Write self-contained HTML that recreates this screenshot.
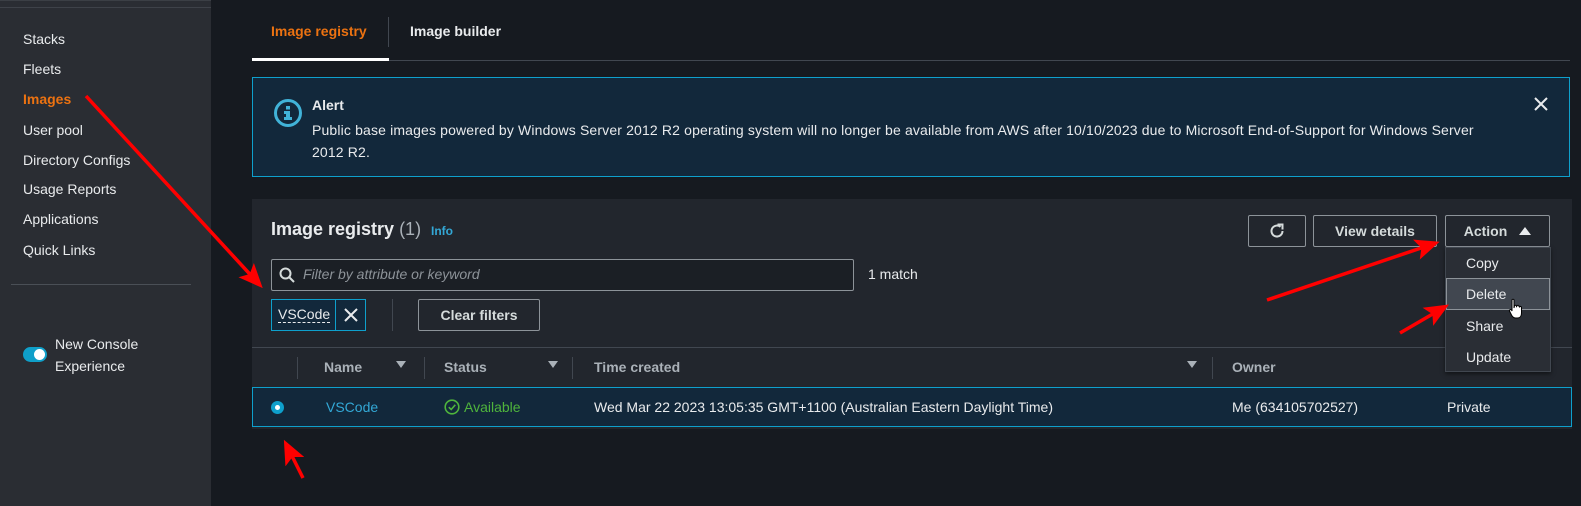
<!DOCTYPE html>
<html><head><meta charset="utf-8"><style>
*{box-sizing:border-box;margin:0;padding:0}
body{width:1581px;height:506px;background:#161a20;font-family:"Liberation Sans",sans-serif;color:#d5dbdb;font-size:14px;position:relative;overflow:hidden}
.a{position:absolute;white-space:nowrap}
.sb{position:absolute;left:0;top:0;width:211px;height:506px;background:#2a2d33;border-top:1px solid #3b3f45}
.nav{position:absolute;left:23px;font-size:14px;color:#e9ebed;line-height:16px}
.btn{position:absolute;border:1px solid #8d9399;border-radius:2px;color:#d5dbdb;font-weight:bold;font-size:14px;display:flex;align-items:center;justify-content:center}
.th{position:absolute;top:359px;font-weight:bold;color:#aab1b8;font-size:14px}
.vd{position:absolute;width:1px;background:#414750}
.tri{position:absolute;top:361px;width:0;height:0;border-left:5px solid transparent;border-right:5px solid transparent;border-top:7px solid #aab1b8}
</style></head><body>
<div class="sb"></div>
<div style="position:absolute;left:0;top:7px;width:211px;height:1px;background:#3e4249"></div>
<div class="nav" style="top:31px">Stacks</div>
<div class="nav" style="top:61px">Fleets</div>
<div class="nav" style="top:91px;color:#ec7211;font-weight:bold">Images</div>
<div class="nav" style="top:122px">User pool</div>
<div class="nav" style="top:152px">Directory Configs</div>
<div class="nav" style="top:181px">Usage Reports</div>
<div class="nav" style="top:211px">Applications</div>
<div class="nav" style="top:242px">Quick Links</div>
<div style="position:absolute;left:11px;top:284px;width:180px;height:1px;background:#4a4f56"></div>
<div style="position:absolute;left:23px;top:347px;width:24px;height:15px;border-radius:8px;background:#0f9fc9"></div>
<div style="position:absolute;left:34px;top:349px;width:11px;height:11px;border-radius:50%;background:#fff"></div>
<div class="nav" style="left:55px;top:333px;line-height:22px">New Console<br>Experience</div>

<div class="a" style="left:271px;top:23px;color:#ec7211;font-weight:bold;font-size:14px">Image registry</div>
<div style="position:absolute;left:388px;top:17px;width:1px;height:30px;background:#414750"></div>
<div class="a" style="left:410px;top:23px;color:#e9ebed;font-weight:bold;font-size:14px">Image builder</div>
<div style="position:absolute;left:252px;top:60px;width:1318px;height:1px;background:#414750"></div>
<div style="position:absolute;left:252px;top:58px;width:137px;height:3px;background:#fff"></div>

<div style="position:absolute;left:252px;top:77px;width:1318px;height:100px;background:#12283b;border:1px solid #0ea0cc"></div>
<svg class="a" style="left:272px;top:97px" width="32" height="32" viewBox="0 0 32 32"><circle cx="16" cy="16" r="12.5" fill="none" stroke="#41b3d8" stroke-width="3"/><rect x="14" y="9" width="4" height="3.5" fill="#41b3d8"/><rect x="12" y="14" width="6" height="3" fill="#41b3d8"/><rect x="14" y="14" width="4" height="8" fill="#41b3d8"/><rect x="12" y="20" width="8" height="3" fill="#41b3d8"/></svg>
<div class="a" style="left:312px;top:97px;font-weight:bold;color:#e9ebed">Alert</div>
<div class="a" style="left:312px;top:119px;color:#e9ebed;line-height:22px;letter-spacing:0.15px">Public base images powered by Windows Server 2012 R2 operating system will no longer be available from AWS after 10/10/2023 due to Microsoft End-of-Support for Windows Server<br>2012 R2.</div>
<svg class="a" style="left:1533px;top:96px" width="16" height="16"><path d="M2 2L14 14M14 2L2 14" stroke="#e9ebed" stroke-width="2"/></svg>

<div style="position:absolute;left:252px;top:199px;width:1320px;height:230px;background:#22262d"></div>
<div class="a" style="left:271px;top:219px;font-size:18px;font-weight:bold;color:#e9ebed">Image registry <span style="font-weight:normal;color:#aab1b8">(1)</span></div>
<div class="a" style="left:431px;top:224px;font-size:12px;font-weight:bold;color:#33a8d6">Info</div>
<div class="btn" style="left:1248px;top:215px;width:58px;height:32px"><svg width="18" height="18" viewBox="0 0 18 18"><path d="M14.5 9A5.5 5.5 0 1 1 12.5 4.8" fill="none" stroke="#d5dbdb" stroke-width="2"/><path d="M9.5 2.5H14.5V7.5" fill="none" stroke="#d5dbdb" stroke-width="2"/></svg></div>
<div class="btn" style="left:1313px;top:215px;width:124px;height:32px">View details</div>
<div class="btn" style="left:1445px;top:215px;width:105px;height:32px">Action <span style="display:inline-block;margin-left:12px;width:0;height:0;border-left:6px solid transparent;border-right:6px solid transparent;border-bottom:8px solid #e9ebed"></span></div>

<div style="position:absolute;left:271px;top:259px;width:583px;height:32px;border:1px solid #8d9399;border-radius:2px;background:#1b1f25"></div>
<svg class="a" style="left:279px;top:267px" width="16" height="16"><circle cx="6.5" cy="6.5" r="5" fill="none" stroke="#d5dbdb" stroke-width="2"/><path d="M10 10L15 15" stroke="#d5dbdb" stroke-width="2"/></svg>
<div class="a" style="left:303px;top:266px;font-style:italic;color:#8d9399">Filter by attribute or keyword</div>
<div class="a" style="left:868px;top:266px;color:#e9ebed">1 match</div>

<div style="position:absolute;left:271px;top:299px;width:95px;height:32px;border:1px solid #0ea0cc;background:#12283b"></div>
<div style="position:absolute;left:335px;top:300px;width:1px;height:30px;background:#0ea0cc"></div>
<div class="a" style="left:278px;top:306px;color:#e9ebed;border-bottom:1px dashed #e9ebed;line-height:16px">VSCode</div>
<svg class="a" style="left:343px;top:307px" width="16" height="16"><path d="M2 2L14 14M14 2L2 14" stroke="#e9ebed" stroke-width="2"/></svg>
<div class="vd" style="left:392px;top:299px;height:32px"></div>
<div class="btn" style="left:418px;top:299px;width:122px;height:32px">Clear filters</div>

<div style="position:absolute;left:252px;top:347px;width:1320px;height:1px;background:#414750"></div>
<div class="vd" style="left:297px;top:357px;height:22px"></div>
<div class="th" style="left:324px">Name</div><div class="tri" style="left:396px"></div>
<div class="vd" style="left:424px;top:357px;height:22px"></div>
<div class="th" style="left:444px">Status</div><div class="tri" style="left:548px"></div>
<div class="vd" style="left:572px;top:357px;height:22px"></div>
<div class="th" style="left:594px">Time created</div><div class="tri" style="left:1187px"></div>
<div class="vd" style="left:1212px;top:357px;height:22px"></div>
<div class="th" style="left:1232px">Owner</div>
<div class="tri" style="left:1537px"></div>

<div style="position:absolute;left:252px;top:387px;width:1320px;height:40px;background:#12283b;border:1px solid #0ea0cc"></div>
<div style="position:absolute;left:271px;top:401px;width:13px;height:13px;border-radius:50%;background:#0ea0cc"></div>
<div style="position:absolute;left:275px;top:405px;width:5px;height:5px;border-radius:50%;background:#fff"></div>
<div class="a" style="left:326px;top:399px;color:#33a8d6">VSCode</div>
<svg class="a" style="left:444px;top:399px" width="16" height="16"><circle cx="8" cy="8" r="6.8" fill="none" stroke="#4fb43c" stroke-width="1.6"/><path d="M4.8 8.2L7.2 10.5L11.3 5.8" fill="none" stroke="#4fb43c" stroke-width="1.6"/></svg>
<div class="a" style="left:464px;top:399px;color:#4fb43c">Available</div>
<div class="a" style="left:594px;top:399px;color:#e9ebed">Wed Mar 22 2023 13:05:35 GMT+1100 (Australian Eastern Daylight Time)</div>
<div class="a" style="left:1232px;top:399px;color:#e9ebed">Me (634105702527)</div>
<div class="a" style="left:1447px;top:399px;color:#e9ebed">Private</div>

<div style="position:absolute;left:1445px;top:247px;width:106px;height:125px;background:#2a2e35;border:1px solid #414750;box-shadow:0 2px 4px rgba(0,0,0,.5)"></div>
<div style="position:absolute;left:1446px;top:278px;width:104px;height:32px;background:#414750;border:1px solid #8d9399"></div>
<div class="a" style="left:1466px;top:255px;color:#e9ebed">Copy</div>
<div class="a" style="left:1466px;top:286px;color:#e9ebed">Delete</div>
<div class="a" style="left:1466px;top:318px;color:#e9ebed">Share</div>
<div class="a" style="left:1466px;top:349px;color:#e9ebed">Update</div>
<svg class="a" style="left:1508px;top:298px" width="16" height="22" viewBox="0 0 16 22"><path d="M4 2C4 1 6 1 6 2V10L6.5 8C7 7 8.5 7 8.5 8.5L9 8C9.5 7 11 7 11 8.5L11.5 9C12 8 13.5 8.5 13.5 9.5V15C13.5 18 12 20 9.5 20H7.5C5.5 20 4.5 19 3.5 17L1.5 13C1 12 2.5 11 3.5 12L4 13Z" fill="#fff" stroke="#000" stroke-width="1"/></svg>

<svg class="a" style="left:0;top:0" width="1581" height="506">
<defs><marker id="m" markerWidth="7" markerHeight="6" refX="5" refY="3" orient="auto"><path d="M0 0L7 3L0 6L1.5 3Z" fill="#f00"/></marker></defs>
<g stroke="#f00" stroke-width="3.5" marker-end="url(#m)">
<line x1="86" y1="96" x2="258" y2="283"/>
<line x1="303" y1="478" x2="287" y2="446"/>
<line x1="1267" y1="300" x2="1433" y2="244"/>
<line x1="1400" y1="333" x2="1443" y2="308"/>
</g></svg>
</body></html>
